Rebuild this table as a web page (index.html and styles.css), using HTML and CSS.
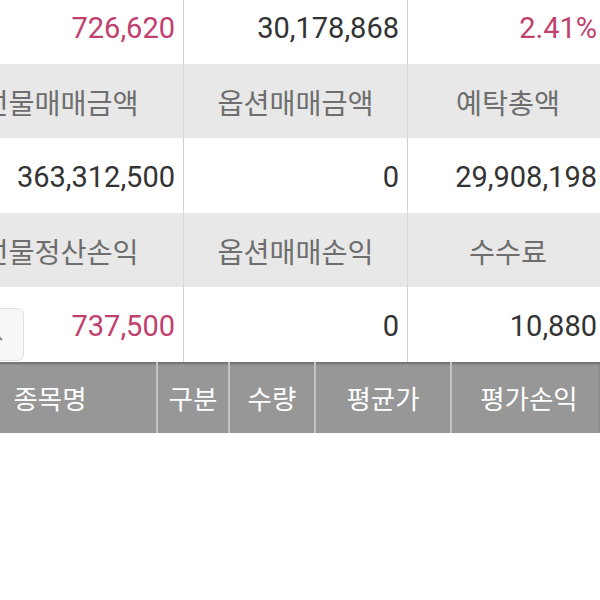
FILE: index.html
```html
<!DOCTYPE html>
<html lang="ko">
<head>
<meta charset="utf-8">
<link rel="stylesheet" href="styles.css">
</head>
<body>
<div class="page">
  <div class="summary">
    <div class="row val r0">
      <div class="cell num pink">726,620</div>
      <div class="cell num">30,178,868</div>
      <div class="cell num pink">2.41%</div>
    </div>
    <div class="row lab">
      <div class="cell label">선물매매금액</div>
      <div class="cell label">옵션매매금액</div>
      <div class="cell label">예탁총액</div>
    </div>
    <div class="row val">
      <div class="cell num">363,312,500</div>
      <div class="cell num">0</div>
      <div class="cell num">29,908,198</div>
    </div>
    <div class="row lab">
      <div class="cell label">선물정산손익</div>
      <div class="cell label">옵션매매손익</div>
      <div class="cell label">수수료</div>
    </div>
    <div class="row val">
      <div class="cell num pink has-btn">
        <span class="fold-btn"><svg width="14" height="10" viewBox="0 0 14 10"><path d="M2 8 L7 3 L12 8" fill="none" stroke="#8a8a8a" stroke-width="2"/></svg></span>
        737,500
      </div>
      <div class="cell num">0</div>
      <div class="cell num">10,880</div>
    </div>
  </div>
  <div class="thead">
    <div class="th">종목명</div>
    <div class="th">구분</div>
    <div class="th">수량</div>
    <div class="th">평균가</div>
    <div class="th">평가손익</div>
  </div>
</div>
</body>
</html>
```
FILE: styles.css
```css
html, body {
  margin: 0;
  padding: 0;
  background: #ffffff;
  overflow: hidden;
}
.page {
  width: 600px;
  height: 600px;
  overflow: hidden;
  position: relative;
}
.summary {
  margin-left: -62px;
  margin-top: -11px;
  width: 670px;
}
.row {
  display: grid;
  grid-template-columns: 245px 224px 201px;
  height: 75px;
}
.row.lab {
  background: #e8e8e8;
  height: 74px;
}
.cell {
  display: flex;
  align-items: center;
  box-sizing: border-box;
}
.cell + .cell {
  border-left: 1px solid #d2d2d2;
}
.row.lab .cell + .cell {
  border-left: 1px solid #d8d8d8;
}
.num {
  justify-content: flex-end;
  padding-right: 8px;
  padding-top: 3px;
  font-family: Roboto, "Noto Sans", sans-serif;
  font-size: 29px;
  color: #333333;
}
.row .cell:nth-child(3).num {
  padding-right: 11px;
}
.pink {
  color: #c0416d;
}
.label {
  justify-content: center;
  font-family: "Noto Sans CJK KR", sans-serif;
  font-size: 28.3px;
  color: #6e6e6e;
}
.has-btn {
  position: relative;
}
.fold-btn {
  position: absolute;
  left: 0;
  top: 21px;
  width: 86px;
  height: 53px;
  box-sizing: border-box;
  border: 1px solid #dedede;
  border-radius: 7px;
  background: #f8f8f8;
  display: flex;
  align-items: center;
  justify-content: flex-end;
  padding-right: 19px;
  padding-top: 4px;
}
.thead {
  display: grid;
  grid-template-columns: 212px 72px 86px 136px 156px;
  margin-left: -56px;
  height: 71px;
  background: #979797;
  box-shadow: inset 0 2px 2px rgba(0,0,0,0.25);
}
.th {
  display: flex;
  align-items: center;
  justify-content: center;
  font-family: "Noto Sans CJK KR", sans-serif;
  font-size: 26.5px;
  color: #ffffff;
}
.th + .th {
  border-left: 2px solid #c4c4c4;
}
```
